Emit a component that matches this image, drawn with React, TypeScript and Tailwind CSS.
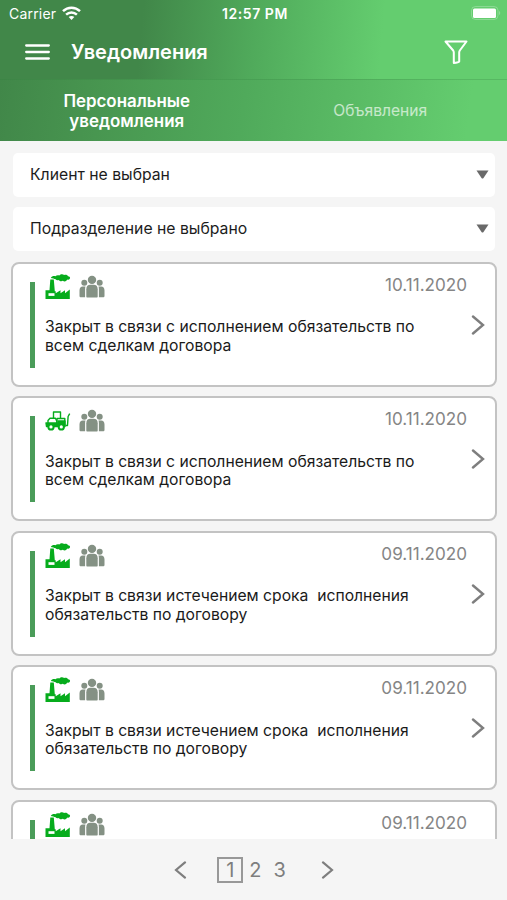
type Notice = {
  id: number;
  icon: "factory" | "loader";
  date: string;
  lines: string[];
};

const closed = ["Закрыт в связи с исполнением обязательств по", "всем сделкам договора"];
const expired = ["Закрыт в связи истечением срока  исполнения", "обязательств по договору"];

const notices: Notice[] = [
  { id: 1, icon: "factory", date: "10.11.2020", lines: closed },
  { id: 2, icon: "loader", date: "10.11.2020", lines: closed },
  { id: 3, icon: "factory", date: "09.11.2020", lines: expired },
  { id: 4, icon: "factory", date: "09.11.2020", lines: expired },
  { id: 5, icon: "factory", date: "09.11.2020", lines: [] },
];

const WifiIcon = () => (
  <svg width="19" height="15" viewBox="0 0 19 15" fill="none" stroke="#fff" strokeWidth="2.5">
    <path d="M1 5.2C5.8.6 13.2.6 18 5.2" />
    <path d="M4.1 8.6c3.1-2.9 7.7-2.9 10.8 0" />
    <path d="M6.7 11.1c1.6-1.5 4-1.5 5.6 0L9.5 14z" fill="#fff" stroke="none" />
  </svg>
);

const BatteryIcon = () => (
  <svg width="30" height="15" viewBox="0 0 30 15">
    <rect x="0.5" y="0.5" width="26.5" height="13" rx="4" fill="none" stroke="#fff" strokeOpacity="0.25" />
    <rect x="2" y="2.5" width="23" height="9.5" rx="1.500" fill="#fff" />
    <path d="M28.3 5v4c1.2-.5 1.2-3.500 0-4z" fill="#fff" fillOpacity="0.4" />
  </svg>
);

const FilterIcon = () => (
  <svg width="24" height="26" viewBox="0 0 24 26" fill="none" stroke="#fff" strokeWidth="2" strokeLinejoin="round">
    <path d="M1.500 2.500h21l-6.700 9c-.4.600-.600 1.200-.600 1.900V22.500Q14.500 23.700 9.800 24V13.400c0-.7-.2-1.300-.6-1.900z" />
  </svg>
);

const FactoryIcon = () => (
  <svg width="26" height="26" viewBox="0 0 26 26" fill="#06ac1c">
    <path d="M5.300 5.500h3.500l1 11.800h.9v2l4.800-3v3l4.500-3v3l4.800-3.800V25H.5v-8.800h4z" />
    <path d="M5.800 4c1.200-2 3-2.400 4.600-1.700C11.500 1 13.200.900 14.300 1.500c1.200-1.500 3.600-1.700 4.800-.4 1.700-.7 3.400-.1 3.900 1.100 1.700-.1 2.500 1.300 1.800 2.500-.5 1-1.700 1.400-2.600.9-.8 2.100-3.200 2.500-4.300 1.200-1.500.9-3.300.5-4.100-.9-1.200.6-2.500.2-3.200-.7C9.300 5 7.600 4.200 5.800 4z" />
    <path d="M3.500 19.200h6v2.700h-6z" fill="#fff" />
  </svg>
);

const LoaderIcon = () => (
  <svg width="26" height="26" viewBox="0 0 26 26" fill="none" stroke="#06ac1c" strokeWidth="1.400" strokeLinejoin="round">
    <path d="M8.500 10V4h7v6.500" />
    <path d="M3 15v-2.500l2-2.200h5.500l1.500 3.500h4" />
    <path d="M12 13.500v-3h7.800v7H11z" fill="#fff" />
    <path d="M1 15h12v-2h7v5.500H1.500z" fill="#06ac1c" />
    <path d="M20.500 17.500h2l.6-9 1.600-2.800" />
    <circle cx="6" cy="18.900" r="2.600" fill="#fff" strokeWidth="2" />
    <circle cx="16.300" cy="18.900" r="2.600" fill="#fff" strokeWidth="2" />
  </svg>
);

const PeopleIcon = () => (
  <svg width="26" height="26" viewBox="0 0 26 26" fill="#849184">
    <circle cx="13" cy="5.900" r="4.200" />
    <circle cx="5.300" cy="8.700" r="3" />
    <circle cx="20.700" cy="8.700" r="3" />
    <path d="M7.300 22.500v-7.300c0-3 1.600-4.400 4-4.400h3.400c2.400 0 4 1.400 4 4.400v7.300c0 .6-.4 1-1 1H8.300c-.6 0-1-.4-1-1z" />
    <path d="M6.100 23.300H2c-.9 0-1.500-.6-1.500-1.400v-5.500c0-2.400 1.300-3.800 3.300-3.800h2.700c-.3.800-.4 1.700-.4 2.600z" />
    <path d="M19.900 23.300H24c.9 0 1.500-.6 1.500-1.400v-5.500c0-2.400-1.300-3.800-3.300-3.800h-2.700c.3.800.4 1.700.4 2.600z" />
  </svg>
);

const Chevron = ({ left = false, className = "" }: { left?: boolean; className?: string }) => (
  <svg viewBox="0 0 14 20" fill="none" stroke="#7e7e7e" strokeWidth="2.400" strokeLinecap="round" className={className}>
    <path d={left ? "M12 1.500 2 10l10 8.500" : "M2 1.500 12 10 2 18.500"} />
  </svg>
);

function Select({ label }: { label: string }) {
  return (
    <div className="flex h-11 items-center justify-between rounded-[5px] bg-white pl-[17px] pr-[6px] text-[15.75px] leading-[22px] text-[#1c1c1c]">
      <span>{label}</span>
      <svg width="13" height="9" viewBox="0 0 13 9" className="mb-[2px]">
        <path d="M.5.500h12l-5 7.400q-1 1.200-2 0z" fill="#696969" />
      </svg>
    </div>
  );
}

function NoticeCard({ notice }: { notice: Notice }) {
  return (
    <article className="flex h-[125px] shrink-0 rounded-[8px] border-2 border-[#c3c3c3] bg-white pl-[17px] pr-[10px]">
      <div className="mt-[18px] h-[86px] w-[5px] shrink-0 bg-[#4a9c59]" />
      <div className="ml-[10px] grow">
        <div className="flex h-9 pt-[10px]">
          <div className="flex grow gap-[8px]">
            {notice.icon === "factory" ? <FactoryIcon /> : <LoaderIcon />}
            <PeopleIcon />
          </div>
          <time className="mr-[18px] text-[17.100px] leading-[22px] text-[#858585]">{notice.date}</time>
        </div>
        <div className="flex">
          <div className="grow pt-[18.400px] text-[15.700px] leading-[18.700px] text-[#1a1a1a]">
            {notice.lines.map((line) => (
              <p key={line} className="whitespace-pre">{line}</p>
            ))}
          </div>
          <Chevron className="mt-[15px] h-5 w-[14px] shrink-0" />
        </div>
      </div>
    </article>
  );
}

export default function App() {
  return (
    <div className="flex h-[900px] w-[507px] flex-col overflow-hidden bg-[#f5f5f5] font-['Inter',sans-serif]">
      <header className="shrink-0 text-white">
        <div className="h-[79px] bg-[linear-gradient(95deg,#418749_0%,#418749_28%,#50aa5b_50%,#64cd6f_75%)]">
          <div className="grid h-7 grid-cols-3 items-center pl-[9px] pr-[6px] text-[14px]">
            <div className="flex items-center gap-[6px] pb-[2px]">
              <span className="tracking-[0.200px]">Carrier</span>
              <WifiIcon />
            </div>
            <span className="pb-[2px] text-center font-semibold tracking-[0.550px]">12:57 PM</span>
            <div className="flex justify-end pb-[1px]"><BatteryIcon /></div>
          </div>
          <div className="flex h-12 items-center pl-[25px] pr-[39px]">
            <svg width="25" height="16" viewBox="0 0 25 16" stroke="#fff" strokeWidth="2.300" strokeLinecap="round">
              <path d="M1.200 1.500h22.600M1.200 8h22.600M1.200 14.500h22.600" />
            </svg>
            <h1 className="ml-[21px] grow text-[20px] font-semibold">Уведомления</h1>
            <FilterIcon />
          </div>
        </div>
        <nav className="grid h-[62px] grid-cols-2 items-center border-t border-[#2f7d3b]/25 bg-[linear-gradient(98deg,#418749_0%,#489650_20%,#50aa5b_48%,#64cd6f_92%)] text-center">
          <span className="text-[16.900px] font-semibold leading-[20px]">Персональные<br />уведомления</span>
          <span className="text-[15.600px] leading-[22px] text-white/65">Объявления</span>
        </nav>
      </header>
      <section className="flex shrink-0 flex-col gap-[10px] pl-[13px] pr-[12px] pt-[12px]">
        <Select label="Клиент не выбран" />
        <Select label="Подразделение не выбрано" />
      </section>
      <main className="ml-[11px] mr-[10px] mt-[11px] flex h-[577px] shrink-0 flex-col gap-[9.400px] overflow-hidden">
        {notices.map((notice) => (
          <NoticeCard key={notice.id} notice={notice} />
        ))}
      </main>
      <footer className="flex grow items-center justify-center pl-px text-[20px] leading-[22px] text-[#7e7e7e]">
        <Chevron left className="h-[18px] w-[13px]" />
        <span className="ml-[30px] flex h-[26px] w-[26px] items-center justify-center border-2 border-[#989898]">1</span>
        <span className="ml-[6px]">2</span>
        <span className="ml-[12px]">3</span>
        <Chevron className="ml-[35px] h-[18px] w-[13px]" />
      </footer>
    </div>
  );
}
